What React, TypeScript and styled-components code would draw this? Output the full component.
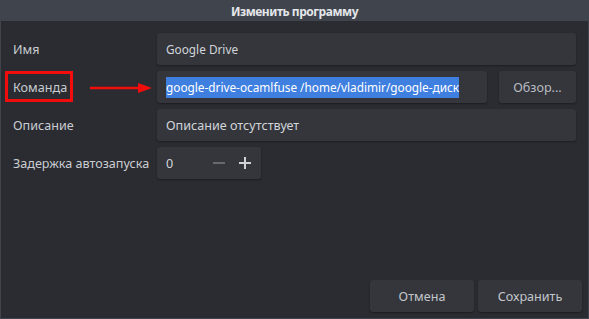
import React from "react";
import styled, { createGlobalStyle } from "styled-components";

const Global = createGlobalStyle`
  html, body { margin: 0; padding: 0; background: #2b2c31; }
  body { font-family: "Noto Sans", "Open Sans", sans-serif; }
  #root { height: 100vh; }
`;

const Window = styled.div`
  height: 319px;
  width: 589px;
  display: flex;
  flex-direction: column;
  background: #2b2c31;
  box-sizing: border-box;
`;

const TitleBar = styled.div`
  height: 21px;
  flex: none;
  background: #40444d;
  color: #e4e7ea;
  font-size: 12px;
  letter-spacing: -0.45px;
  font-weight: 700;
  display: flex;
  align-items: center;
  justify-content: center;
  padding-top: 1px;
  box-sizing: border-box;
`;

const Body = styled.div`
  flex: 1;
  display: flex;
  flex-direction: column;
  border: 1px solid #40444d;
  border-top: none;
  padding: 12px 6px 6px 12px;
  box-sizing: border-box;
`;

const Form = styled.div`
  display: grid;
  grid-template-columns: 144px minmax(0, 1fr);
  grid-auto-rows: 32px;
  row-gap: 6px;
  padding-right: 6px;
`;

const Label = styled.div<{ $marked?: boolean }>`
  position: relative;
  display: flex;
  align-items: center;
  color: #c9ccd1;
  font-size: 12.6px;
  ${(p) =>
    p.$marked &&
    `
    &::before {
      content: "";
      position: absolute;
      left: -8px;
      top: 0;
      width: 62px;
      height: 25px;
      border: 3px solid #f20d0d;
    }
  `}
`;

const Arrow = styled.svg`
  position: absolute;
  left: 77px;
  top: 11px;
`;

const Field = styled.div<{ $fill?: boolean; $latin?: boolean }>`
  display: flex;
  align-items: center;
  background: #34363c;
  border-radius: 3px;
  box-shadow: 0 1px 2px rgba(0, 0, 0, 0.35);
  color: #d2d5d9;
  font-size: ${(p) => (p.$latin ? "11.8px" : "12.6px")};
  padding: 0 9px;
  box-sizing: border-box;
  white-space: nowrap;
  overflow: hidden;
  min-width: 0;
  ${(p) => p.$fill && "flex: 1;"}
`;

const Selected = styled.span`
  background: #3f7fe0;
  color: #ffffff;
  padding: 2px 0 3px;
`;

const CommandRow = styled.div`
  display: flex;
  gap: 12px;
  min-width: 0;
`;

const BrowseButton = styled.button`
  width: 77px;
  flex: none;
  border: none;
  border-radius: 3px;
  background: #34363c;
  box-shadow: 0 1px 2px rgba(0, 0, 0, 0.35);
  color: #b9bcc1;
  font-family: inherit;
  font-size: 12.6px;
  padding: 0;
`;

const Spin = styled.div`
  width: 104px;
  display: flex;
  align-items: center;
  background: #34363c;
  border-radius: 3px;
  box-shadow: 0 1px 2px rgba(0, 0, 0, 0.35);
  color: #d2d5d9;
  font-size: 12.6px;
  padding: 0 3px 0 9px;
  box-sizing: border-box;
`;

const SpinValue = styled.span`
  flex: 1;
`;

const SpinBtn = styled.span<{ $disabled?: boolean }>`
  width: 26px;
  display: flex;
  justify-content: center;
  align-items: center;
  color: ${(p) => (p.$disabled ? "#66696f" : "#cfd2d6")};
`;

const Footer = styled.div`
  margin-top: auto;
  display: flex;
  justify-content: flex-end;
  gap: 4px;
`;

const DialogButton = styled.button`
  width: 104px;
  height: 32px;
  border: none;
  border-radius: 3px;
  background: #34363c;
  box-shadow: 0 1px 2px rgba(0, 0, 0, 0.35);
  color: #c3c6cb;
  font-family: inherit;
  font-size: 12.6px;
  padding: 0;
`;

export default function App() {
  return (
    <>
      <Global />
      <Window>
        <TitleBar>Изменить программу</TitleBar>
        <Body>
          <Form>
            <Label>Имя</Label>
            <Field $latin>Google Drive</Field>

            <Label $marked>
              Команда
              <Arrow width="64" height="12" viewBox="0 0 64 12">
                <line x1="0" y1="6" x2="52" y2="6" stroke="#f20d0d" strokeWidth="2.5" />
                <polygon points="48,1 62,6 48,11" fill="#f20d0d" />
              </Arrow>
            </Label>
            <CommandRow>
              <Field $fill $latin>
                <Selected>google-drive-ocamlfuse /home/vladimir/google-диск</Selected>
              </Field>
              <BrowseButton>Обзор...</BrowseButton>
            </CommandRow>

            <Label>Описание</Label>
            <Field>Описание отсутствует</Field>

            <Label>Задержка автозапуска</Label>
            <Spin>
              <SpinValue>0</SpinValue>
              <SpinBtn $disabled>
                <svg width="12" height="12" viewBox="0 0 12 12">
                  <rect x="0" y="5" width="12" height="2" fill="currentColor" />
                </svg>
              </SpinBtn>
              <SpinBtn>
                <svg width="12" height="12" viewBox="0 0 12 12">
                  <rect x="0" y="5" width="12" height="2" fill="currentColor" />
                  <rect x="5" y="0" width="2" height="12" fill="currentColor" />
                </svg>
              </SpinBtn>
            </Spin>
          </Form>
          <Footer>
            <DialogButton>Отмена</DialogButton>
            <DialogButton>Сохранить</DialogButton>
          </Footer>
        </Body>
      </Window>
    </>
  );
}
